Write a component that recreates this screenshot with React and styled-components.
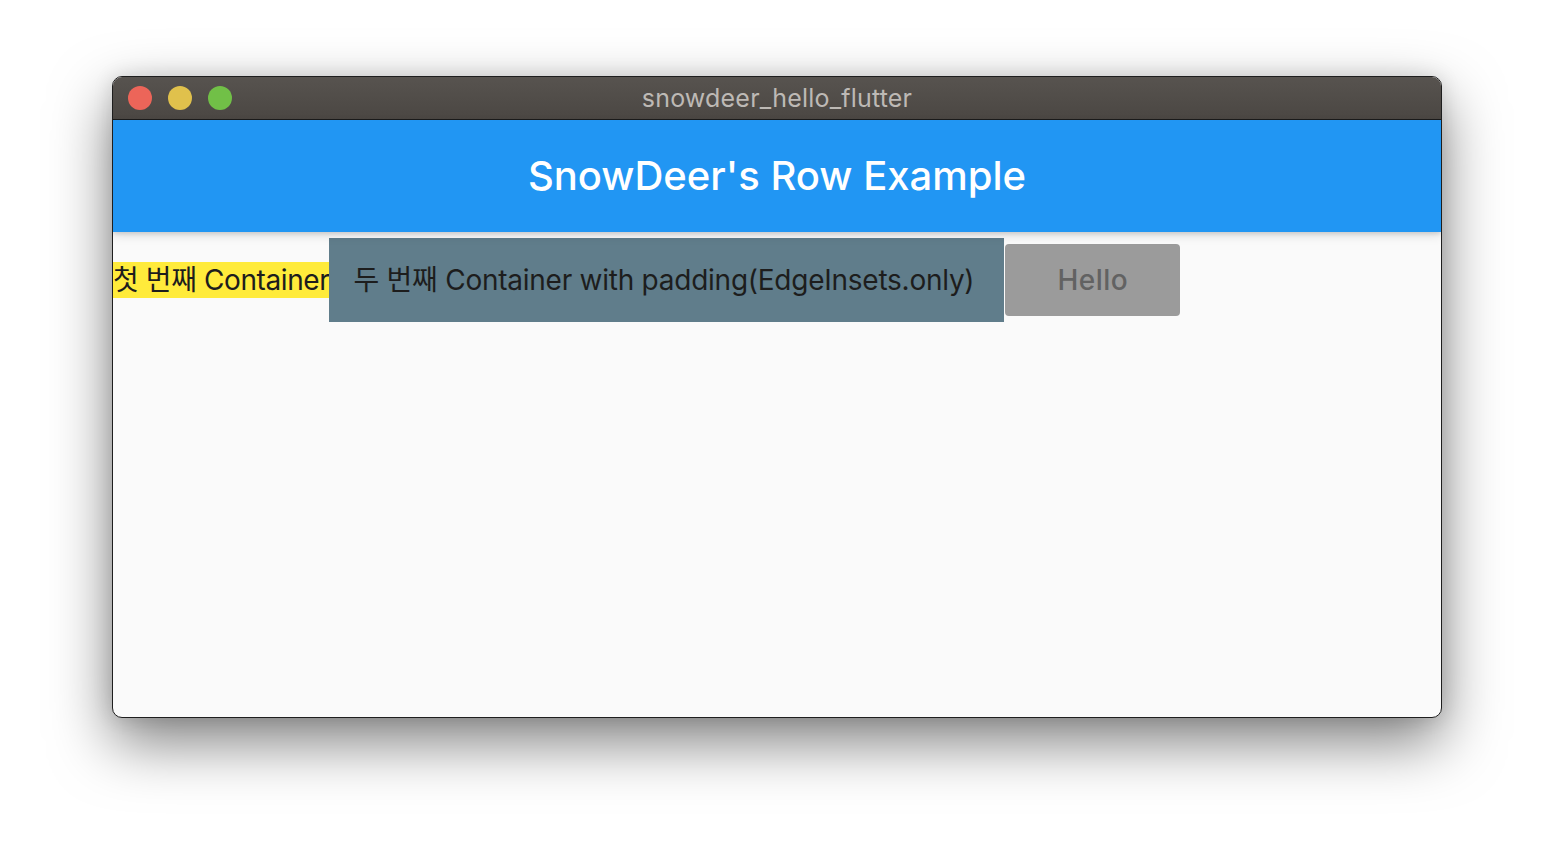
import React from 'react';
import styled, { createGlobalStyle } from 'styled-components';

const GlobalStyle = createGlobalStyle`
  html, body {
    margin: 0;
    padding: 0;
    background: #ffffff;
  }
  body {
    font-family: Inter, "Noto Sans CJK KR", sans-serif;
    -webkit-font-smoothing: antialiased;
  }
`;

const Desktop = styled.div`
  width: 1554px;
  height: 866px;
  box-sizing: border-box;
  padding: 76px 0 0 112px;
  background: #ffffff;
  overflow: hidden;
`;

const Window = styled.div`
  width: 1330px;
  height: 642px;
  box-sizing: border-box;
  border: 1px solid #1e1e1e;
  border-radius: 10px;
  overflow: hidden;
  display: flex;
  flex-direction: column;
  background: #fafafa;
  box-shadow: 0 24px 60px rgba(0, 0, 0, 0.5), 0 0 20px rgba(0, 0, 0, 0.12);
`;

const TitleBar = styled.div`
  position: relative;
  height: 42px;
  flex: none;
  display: flex;
  align-items: center;
  justify-content: center;
  background: linear-gradient(#57534f, #4b4743);
  border-bottom: 1px solid #1c1c1c;
`;

const Lights = styled.div`
  position: absolute;
  left: 15px;
  top: 9px;
  display: flex;
  gap: 16px;
`;

const Light = styled.span`
  width: 24px;
  height: 24px;
  border-radius: 50%;
  background: ${(p) => p.color};
`;

const WindowTitle = styled.div`
  color: #bdb9b5;
  font-size: 25px;
  letter-spacing: 0.2px;
`;

const AppBar = styled.div`
  position: relative;
  z-index: 1;
  height: 112px;
  flex: none;
  display: flex;
  align-items: center;
  justify-content: center;
  background: #2196f3;
  box-shadow: 0 2px 4px rgba(0, 0, 0, 0.12), 0 4px 10px rgba(0, 0, 0, 0.1);
`;

const AppTitle = styled.h1`
  margin: 0 0 2px;
  color: #ffffff;
  font-size: 40px;
  font-weight: 500;
  letter-spacing: 0;
`;

const Body = styled.div`
  flex: 1;
`;

const Row = styled.div`
  height: 96px;
  display: flex;
  align-items: center;
`;

const Box = styled.div`
  background: ${(p) => p.bg};
  padding: ${(p) => p.pad || '0'};
  color: #1d1d1d;
  font-size: 28px;
  line-height: 36px;
  letter-spacing: ${(p) => p.tracking || '-0.25px'};
  white-space: nowrap;
`;

const DisabledButton = styled.button`
  margin-left: 1px;
  width: 175px;
  height: 72px;
  border: none;
  border-radius: 4px;
  background: #9b9b9b;
  color: #626262;
  font-family: inherit;
  font-size: 28px;
  font-weight: 500;
  letter-spacing: 0.5px;
`;

export default function App() {
  return (
    <>
      <GlobalStyle />
      <Desktop>
        <Window>
          <TitleBar>
            <Lights>
              <Light color="#ec6559" />
              <Light color="#e0c14c" />
              <Light color="#71c047" />
            </Lights>
            <WindowTitle>snowdeer_hello_flutter</WindowTitle>
          </TitleBar>
          <AppBar>
            <AppTitle>SnowDeer's Row Example</AppTitle>
          </AppBar>
          <Body>
            <Row>
              <Box bg="#ffeb3b" tracking="-0.4px">첫 번째 Container</Box>
              <Box bg="#607d8b" pad="24px 30px 24px 24px">
                두 번째 Container with padding(EdgeInsets.only)
              </Box>
              <DisabledButton disabled>Hello</DisabledButton>
            </Row>
          </Body>
        </Window>
      </Desktop>
    </>
  );
}
